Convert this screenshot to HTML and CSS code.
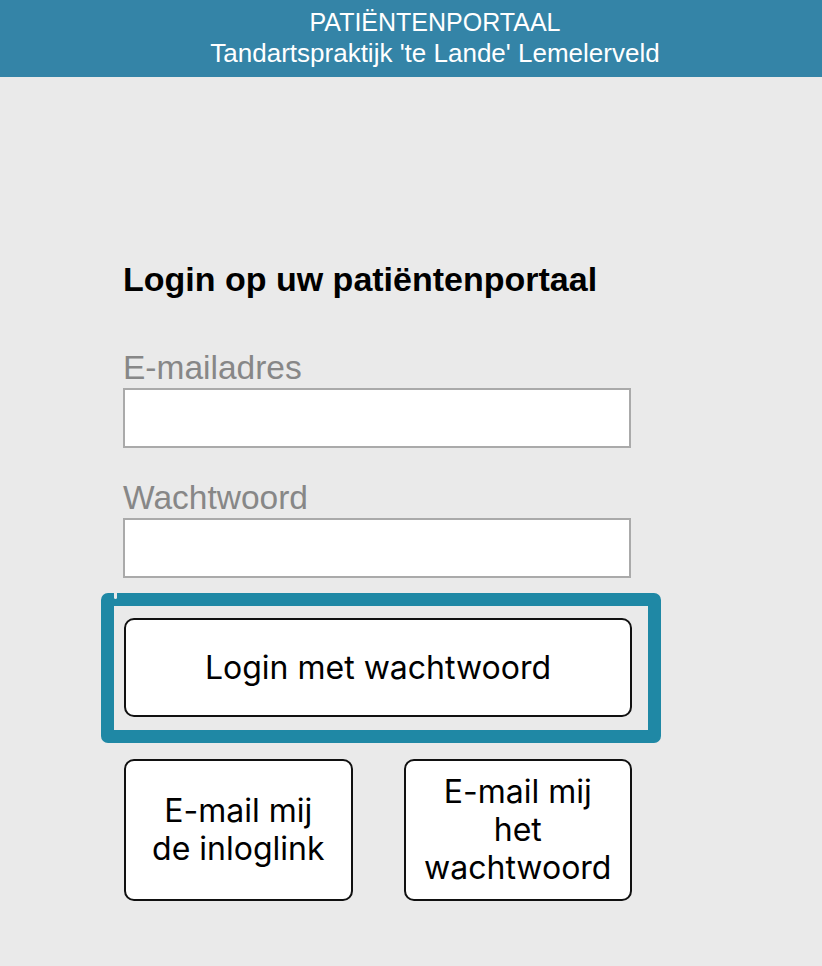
FILE: index.html
```html
<!DOCTYPE html>
<html lang="nl">
<head>
<meta charset="utf-8">
<title>Patiëntenportaal</title>
<link rel="stylesheet" href="styles.css">
</head>
<body>
<header class="topbar">
  <div class="topbar-title">PATIËNTENPORTAAL</div>
  <div class="topbar-sub">Tandartspraktijk 'te Lande' Lemelerveld</div>
</header>
<main class="main">
  <h1 class="heading">Login op uw patiëntenportaal</h1>
  <form class="form">
    <div class="field">
      <label class="label" for="email">E-mailadres</label>
      <input class="input" id="email" type="email">
    </div>
    <div class="field field-last">
      <label class="label" for="pw">Wachtwoord</label>
      <input class="input" id="pw" type="password">
    </div>
    <div class="login-wrap">
      <button class="btn btn-login" type="button">Login met wachtwoord</button>
      <span class="focus-frame"></span>
      <span class="focus-notch"></span>
    </div>
    <div class="btn-row">
      <button class="btn btn-small" type="button">E-mail mij de inloglink</button>
      <button class="btn btn-small" type="button">E-mail mij het wachtwoord</button>
    </div>
  </form>
</main>
</body>
</html>
```
FILE: styles.css
```css
* { box-sizing: border-box; }

body {
  margin: 0;
  background: #eaeaea;
  font-family: "Liberation Sans", Arial, sans-serif;
}

.topbar {
  height: 77px;
  padding: 7px 0 0 48px;
  background: #3484a7;
  color: #ffffff;
  text-align: center;
}

.topbar-title {
  font-size: 25px;
  line-height: 31px;
}

.topbar-sub {
  font-size: 26px;
  line-height: 31px;
}

.main {
  padding: 182px 0 0 123px;
}

.heading {
  margin: 0 0 50px;
  font-size: 34px;
  line-height: 40px;
  font-weight: 700;
  color: #000000;
}

.form {
  width: 509px;
}

.field {
  margin-bottom: 31px;
}

.field-last {
  margin-bottom: 40px;
}

.label {
  display: block;
  margin-bottom: 1px;
  font-size: 33.5px;
  line-height: 38px;
  color: #878787;
}

.input {
  display: block;
  width: 508px;
  height: 60px;
  margin: 0;
  border: 2px solid #aaaaaa;
  background: #ffffff;
  outline: none;
}

.btn {
  margin: 0;
  border: 2px solid #111111;
  border-radius: 10px;
  background: #ffffff;
  color: #000000;
  font-family: Inter, "Noto Sans", sans-serif;
  font-size: 32px;
  line-height: 38px;
  text-align: center;
}

.login-wrap {
  position: relative;
  margin-left: 1px;
}

.btn-login {
  display: block;
  width: 508px;
  height: 99px;
}

.focus-frame {
  position: absolute;
  left: -23px;
  top: -25px;
  right: -29px;
  bottom: -26px;
  border: 13px solid #1f88a5;
  border-radius: 7px;
  pointer-events: none;
}

.focus-notch {
  position: absolute;
  left: -10px;
  top: -25px;
  width: 3px;
  height: 6px;
  background: #eaeaea;
  border-radius: 0 0 2px 2px;
  pointer-events: none;
}

.btn-row {
  display: flex;
  gap: 51px;
  margin: 42px 0 0 1px;
}

.btn-small {
  width: 229px;
  height: 142px;
  padding: 0 18px;
}
```
